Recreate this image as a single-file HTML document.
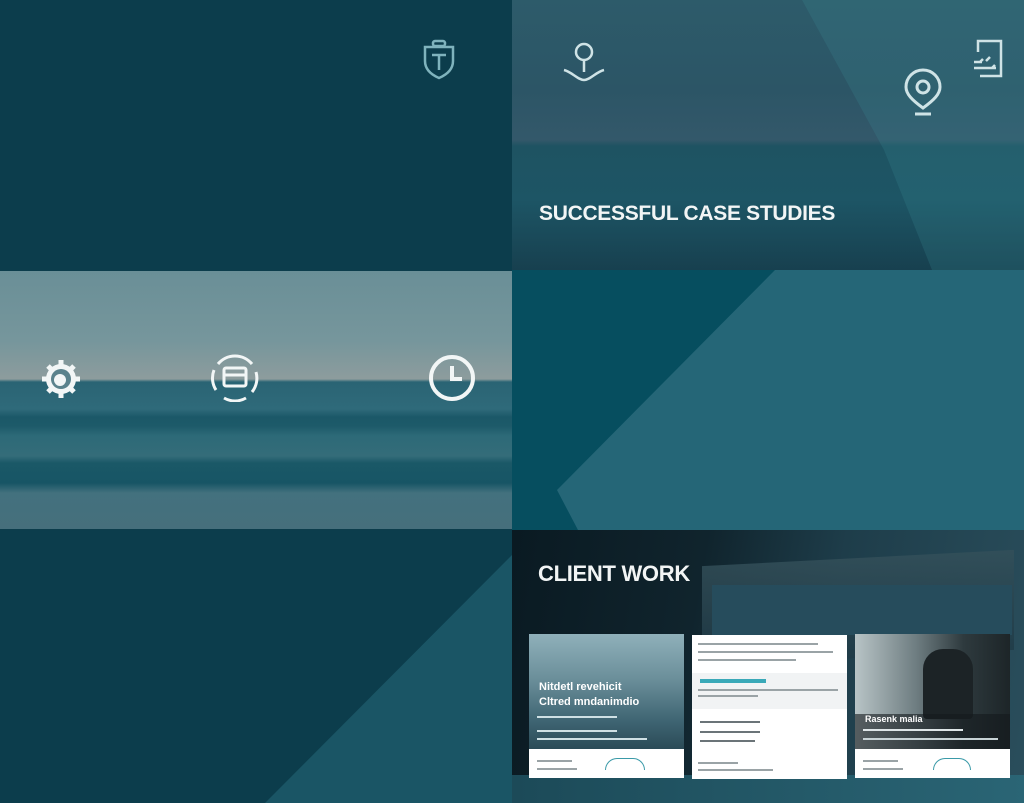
<!DOCTYPE html>
<html><head><meta charset="utf-8"><style>
*{margin:0;padding:0;box-sizing:border-box}
body{width:1024px;height:803px;overflow:hidden;background:#0c3d4c;font-family:"Liberation Sans",sans-serif;position:relative}
.p{position:absolute;overflow:hidden}
.t{position:absolute;color:#f2f5f5;font-weight:bold;letter-spacing:0}
.card{position:absolute;background:#fff;overflow:hidden}
.ln{position:absolute;height:2px;background:#9aa3a6}
</style></head><body>
<div class="p" style="left:0;top:0;width:512px;height:270px;background:#0c3d4c">
<svg style="position:absolute;left:420px;top:38px" width="40" height="44" viewBox="0 0 40 44" fill="none" stroke="#7fb3bd" stroke-width="2.5"><rect x="13" y="3" width="12" height="5" rx="2"/><path d="M5 9h28v14c0 9-7 14-14 17C12 37 5 32 5 23z"/><path d="M12 17h14M19 17v15"/></svg>
</div>
<div class="p" style="left:512px;top:0;width:512px;height:270px;background:linear-gradient(#2d5b6a,#2c5566 90px,#33586a 140px,#1e5362 146px,#1d5565 200px,#17404f 270px)">
<div style="position:absolute;inset:0;background:rgba(60,140,150,.22);clip-path:polygon(290px 0,512px 0,512px 270px,420px 270px,372px 150px)"></div>
<svg style="position:absolute;left:48px;top:40px" width="50" height="45" viewBox="0 0 50 45" fill="none" stroke="#cfe3e6" stroke-width="2.5"><circle cx="24" cy="12" r="8"/><path d="M24 20v12M4 30c8 2 14 10 20 10s12-8 20-10"/></svg>
<svg style="position:absolute;left:390px;top:68px" width="42" height="50" viewBox="0 0 42 50" fill="none" stroke="#cfe3e6" stroke-width="3"><path d="M21 40C10 32 4 26 4 19a17 17 0 0 1 34 0c0 7-6 13-17 21z"/><circle cx="21" cy="19" r="6"/><path d="M13 46h16"/></svg>
<svg style="position:absolute;left:458px;top:38px" width="36" height="42" viewBox="0 0 36 42" fill="none" stroke="#cfe3e6" stroke-width="2.5"><path d="M8 14V3h23v35H10"/><path d="M4 24h8M10 24l3-3M16 23l4-4M4 30h22M22 30l3-3"/></svg>
<div class="t" style="left:27px;top:202px;font-size:21px;letter-spacing:-0.3px">SUCCESSFUL CASE STUDIES</div>
</div>
<div class="p" style="left:0;top:271px;width:512px;height:258px;background:linear-gradient(#6a8f97,#76969c 70px,#8d9c9d 108px,#2a6474 111px,#2f6a7a 138px,#1b5868 146px,#1d5a69 155px,#2d6a78 165px,#346c79 185px,#1a5867 192px,#175565 212px,#43717e 222px,#466f7c 258px)"></div>
<svg style="position:absolute;left:40px;top:358px" width="42" height="42" viewBox="0 0 42 42"><g fill="#f2f6f6"><circle cx="21" cy="21" r="15"/><g stroke="#f2f6f6" stroke-width="5"><path d="M21 2v38M2 21h38M8 8l26 26M34 8L8 34"/></g></g><circle cx="21" cy="21" r="10" fill="#5a828c"/><circle cx="20" cy="22" r="6" fill="#f2f6f6"/></svg>
<svg style="position:absolute;left:208px;top:352px" width="54" height="50" viewBox="0 0 54 50" fill="none" stroke="#f2f6f6" stroke-width="3"><path d="M10 12A22 22 0 0 1 44 12M48 20a22 22 0 0 1-4 20M38 46a22 22 0 0 1-22 0M8 38a22 22 0 0 1-2-20"/><rect x="16" y="16" width="22" height="18" rx="2"/><path d="M16 23h22"/></svg>
<svg style="position:absolute;left:426px;top:352px" width="52" height="52" viewBox="0 0 52 52" fill="none" stroke="#f2f6f6" stroke-width="4"><circle cx="26" cy="26" r="21"/><path d="M26 14v13h10"/></svg>
<div class="p" style="left:512px;top:270px;width:512px;height:260px;background:#064e5f">
<div style="position:absolute;inset:0;background:#256677;clip-path:polygon(263px 0,512px 0,512px 260px,66px 260px,45px 220px)"></div>
</div>
<div class="p" style="left:0;top:529px;width:512px;height:274px;background:#0c3d4c">
<div style="position:absolute;inset:0;background:#1a5565;clip-path:polygon(512px 26px,512px 274px,265px 274px)"></div>
</div>
<div class="p" style="left:512px;top:530px;width:512px;height:273px;background:linear-gradient(100deg,#0a1a22 0%,#10242d 35%,#1e3d4a 60%,#2a4e5c 100%)">
<div style="position:absolute;left:190px;top:28px;width:312px;height:100px;background:linear-gradient(#34505a,#1f3a46);opacity:.8;transform:skewY(-3deg)"></div>
<div style="position:absolute;left:200px;top:55px;width:300px;height:50px;background:#264c5c"></div>
<div style="position:absolute;left:0;top:245px;width:512px;height:28px;background:linear-gradient(90deg,#1c4a58,#2a6575)"></div>
<div class="t" style="left:26px;top:31px;font-size:22px;letter-spacing:-0.3px">CLIENT WORK</div>
<div class="card" style="left:17px;top:104px;width:155px;height:144px">
 <div style="height:115px;background:linear-gradient(#8fb0ba,#6a8e99 40%,#3f6573 75%,#2b4b57)"></div>
 <div style="position:absolute;left:10px;top:46px;color:#fff;font-size:11px;font-weight:bold;line-height:15px">Nitdetl revehicit<br>Cltred mndanimdio</div>
 <div class="ln" style="left:8px;top:82px;width:80px;background:#cfe0e4"></div>
 <div class="ln" style="left:8px;top:96px;width:80px;background:#cfe0e4"></div>
 <div class="ln" style="left:8px;top:104px;width:110px;background:#cfe0e4"></div>
 <div class="ln" style="left:8px;top:126px;width:35px"></div><div class="ln" style="left:8px;top:134px;width:40px"></div>
 <div style="position:absolute;left:76px;top:124px;width:40px;height:12px;border:1.5px solid #3a9aa8;border-bottom:none;border-radius:20px 20px 0 0"></div>
</div>
<div class="card" style="left:180px;top:105px;width:155px;height:144px">
 <div class="ln" style="left:6px;top:8px;width:120px"></div><div class="ln" style="left:6px;top:16px;width:135px"></div><div class="ln" style="left:6px;top:24px;width:98px"></div>
 <div style="position:absolute;left:0;top:38px;width:155px;height:36px;background:#f1f3f4"></div>
 <div style="position:absolute;left:8px;top:44px;width:66px;height:4px;background:#3aa9b8"></div>
 <div class="ln" style="left:6px;top:54px;width:140px"></div><div class="ln" style="left:6px;top:60px;width:60px"></div>
 <div class="ln" style="left:8px;top:86px;width:60px;background:#6b7478"></div><div class="ln" style="left:8px;top:96px;width:60px;background:#6b7478"></div><div class="ln" style="left:8px;top:105px;width:55px;background:#6b7478"></div>
 <div class="ln" style="left:6px;top:127px;width:40px"></div><div class="ln" style="left:6px;top:134px;width:75px"></div>
</div>
<div class="card" style="left:343px;top:104px;width:155px;height:144px">
 <div style="height:115px;background:linear-gradient(90deg,#b8c4c6,#6d7c80 40%,#2e3a3e 70%,#1d2528)"></div>
 <div style="position:absolute;left:68px;top:15px;width:50px;height:70px;background:#1c2326;border-radius:20px 20px 4px 4px"></div>
 <div style="position:absolute;left:0;top:80px;width:155px;height:35px;background:rgba(20,25,28,.6)"></div>
 <div style="position:absolute;left:10px;top:80px;color:#fff;font-size:9px;font-weight:bold">Rasenk malia</div>
 <div class="ln" style="left:8px;top:95px;width:100px;background:#dfe6e8"></div><div class="ln" style="left:8px;top:104px;width:135px;background:#c8d3d6"></div>
 <div class="ln" style="left:8px;top:126px;width:35px"></div><div class="ln" style="left:8px;top:134px;width:40px"></div>
 <div style="position:absolute;left:78px;top:124px;width:38px;height:12px;border:1.5px solid #3a9aa8;border-bottom:none;border-radius:20px 20px 0 0"></div>
</div>
</div>
</body></html>
